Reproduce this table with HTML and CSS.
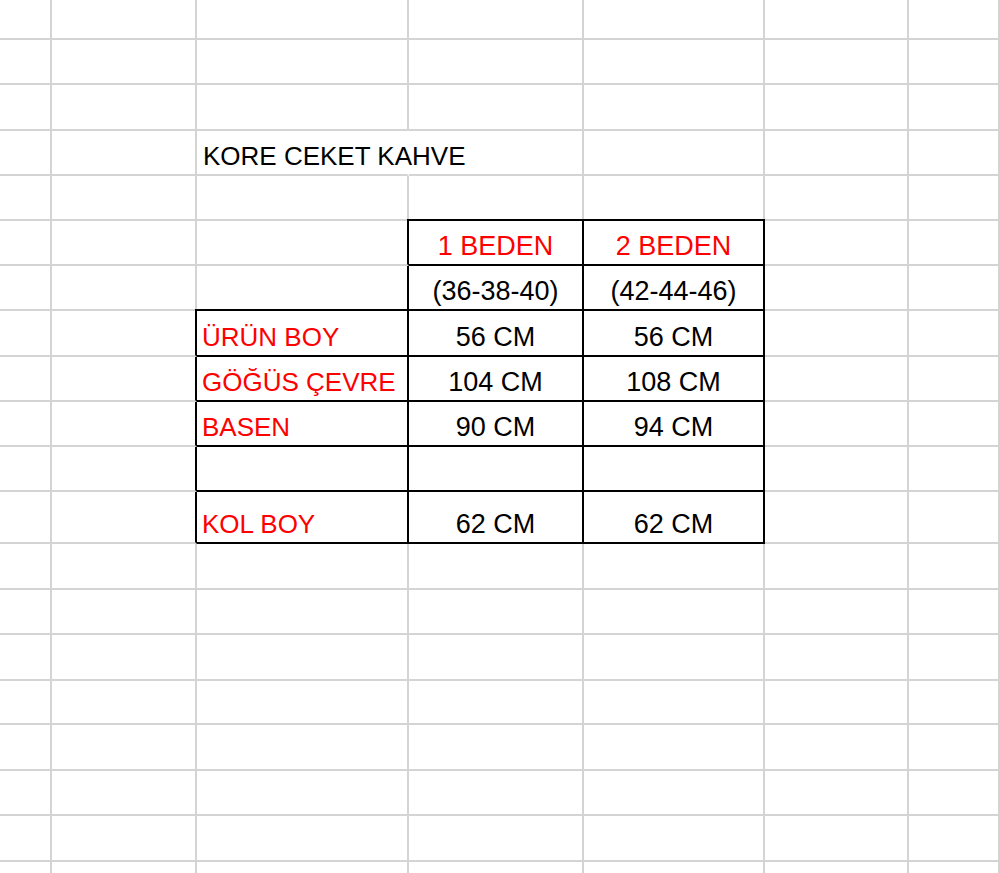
FILE: index.html
```html
<!DOCTYPE html>
<html lang="tr">
<head>
<meta charset="utf-8">
<title>KORE CEKET KAHVE</title>
<link rel="stylesheet" href="styles.css">
</head>
<body>
<div class="sheet">
  <!-- r0 -->
  <div class="c"></div><div class="c"></div><div class="c"></div><div class="c"></div><div class="c"></div><div class="c"></div><div class="c"></div>
  <!-- r1 -->
  <div class="c"></div><div class="c"></div><div class="c"></div><div class="c"></div><div class="c"></div><div class="c"></div><div class="c"></div>
  <!-- r2 -->
  <div class="c"></div><div class="c"></div><div class="c"></div><div class="c"></div><div class="c"></div><div class="c"></div><div class="c"></div>
  <!-- r3 title -->
  <div class="c"></div><div class="c"></div><div class="c title">KORE CEKET KAHVE</div><div class="c"></div><div class="c"></div><div class="c"></div><div class="c"></div>
  <!-- r4 -->
  <div class="c"></div><div class="c"></div><div class="c"></div><div class="c bb"></div><div class="c bb"></div><div class="c"></div><div class="c"></div>
  <!-- r5 -->
  <div class="c"></div><div class="c"></div><div class="c br up"></div><div class="c bb br up ctr red">1 BEDEN</div><div class="c bb br up ctr red">2 BEDEN</div><div class="c"></div><div class="c"></div>
  <!-- r6 -->
  <div class="c"></div><div class="c"></div><div class="c bb br"></div><div class="c bb br ctr">(36-38-40)</div><div class="c bb br ctr">(42-44-46)</div><div class="c"></div><div class="c"></div>
  <!-- r7 -->
  <div class="c"></div><div class="c br up"></div><div class="c bb br lbl">ÜRÜN BOY</div><div class="c bb br ctr">56 CM</div><div class="c bb br ctr">56 CM</div><div class="c"></div><div class="c"></div>
  <!-- r8 -->
  <div class="c"></div><div class="c br"></div><div class="c bb br lbl">GÖĞÜS ÇEVRE</div><div class="c bb br ctr">104 CM</div><div class="c bb br ctr">108 CM</div><div class="c"></div><div class="c"></div>
  <!-- r9 -->
  <div class="c"></div><div class="c br"></div><div class="c bb br lbl">BASEN</div><div class="c bb br ctr">90 CM</div><div class="c bb br ctr">94 CM</div><div class="c"></div><div class="c"></div>
  <!-- r10 -->
  <div class="c"></div><div class="c br"></div><div class="c bb br lbl"></div><div class="c bb br ctr"></div><div class="c bb br ctr"></div><div class="c"></div><div class="c"></div>
  <!-- r11 -->
  <div class="c"></div><div class="c br"></div><div class="c bb br lbl">KOL BOY</div><div class="c bb br ctr">62 CM</div><div class="c bb br ctr">62 CM</div><div class="c"></div><div class="c"></div>
  <!-- r12 -->
  <div class="c"></div><div class="c"></div><div class="c"></div><div class="c"></div><div class="c"></div><div class="c"></div><div class="c"></div>
  <!-- r13 -->
  <div class="c"></div><div class="c"></div><div class="c"></div><div class="c"></div><div class="c"></div><div class="c"></div><div class="c"></div>
  <!-- r14 -->
  <div class="c"></div><div class="c"></div><div class="c"></div><div class="c"></div><div class="c"></div><div class="c"></div><div class="c"></div>
  <!-- r15 -->
  <div class="c"></div><div class="c"></div><div class="c"></div><div class="c"></div><div class="c"></div><div class="c"></div><div class="c"></div>
  <!-- r16 -->
  <div class="c"></div><div class="c"></div><div class="c"></div><div class="c"></div><div class="c"></div><div class="c"></div><div class="c"></div>
  <!-- r17 -->
  <div class="c"></div><div class="c"></div><div class="c"></div><div class="c"></div><div class="c"></div><div class="c"></div><div class="c"></div>
  <!-- r18 -->
  <div class="c"></div><div class="c"></div><div class="c"></div><div class="c"></div><div class="c"></div><div class="c"></div><div class="c"></div>
  <!-- r19 -->
  <div class="c"></div><div class="c"></div><div class="c"></div><div class="c"></div><div class="c"></div><div class="c"></div><div class="c"></div>
</div>
</body>
</html>
```

FILE: styles.css
```css
html, body {
  margin: 0;
  padding: 0;
  background: #ffffff;
  overflow: hidden;
}

body {
  font-family: "Liberation Sans", Arial, sans-serif;
  color: #000000;
}

.sheet {
  display: grid;
  width: 1000px;
  grid-template-columns: 52px 145px 212px 175px 181px 144px 1fr;
  grid-template-rows: 40px 45px 46px 45px 45px 45px 45px 46px 45px 45px 45px 52px 46px 45px 46px 44px 46px 45px 46px 45px;
}

.c {
  box-sizing: border-box;
  min-width: 0;
  display: flex;
  align-items: flex-end;
  border-right: 2px solid #d4d4d4;
  border-bottom: 2px solid #d4d4d4;
  padding: 0 0 5px 0;
  font-size: 27px;
  line-height: 26px;
  white-space: nowrap;
}

.c.bb {
  border-bottom-color: #000000;
}

.c.br {
  border-right-color: #000000;
}

.c.up {
  margin-top: -2px;
}

.ctr {
  justify-content: center;
}

.red {
  color: #ff0000;
}

.lbl {
  color: #ff0000;
  padding-left: 5px;
  font-size: 26px;
}

.title {
  padding-left: 6px;
  font-size: 26px;
  border-right-color: transparent;
}
```
